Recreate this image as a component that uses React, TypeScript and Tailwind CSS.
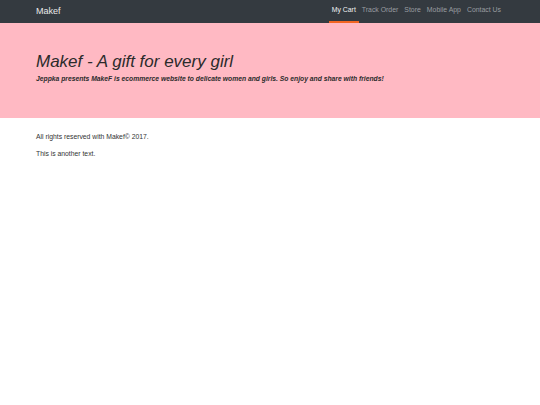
const links = ["My Cart", "Track Order", "Store", "Mobile App", "Contact Us"];

export default function App() {
  return (
    <div className="min-h-[405px] bg-white font-['Liberation_Sans',Arial,sans-serif] text-[#212529]">
      <nav className="flex h-[23px] items-stretch justify-between bg-[#343a40] pl-[36px] pr-[36px]">
        <a className="flex items-center text-[9px] text-[#e9e9e9]">Makef</a>
        <ul className="flex items-stretch">
          {links.map((l, i) => (
            <li
              key={l}
              className={`flex items-center border-b-2 px-[3px] text-[6.9px] ${
                i === 0 ? "border-[#f26522] text-[#f2f2f2]" : "border-transparent text-[#9a9da0]"
              }`}
            >
              {l}
            </li>
          ))}
        </ul>
      </nav>
      <header className="h-[95px] bg-[#ffb9c3] px-[36px] pt-[29px]">
        <h1 className="text-[17px] leading-[20px] italic text-[#2b2b2b]">Makef - A gift for every girl</h1>
        <p className="mt-[2px] text-[6.75px] font-bold italic text-[#2b2b2b]">
          Jeppka presents MakeF is ecommerce website to delicate women and girls. So enjoy and share with friends!
        </p>
      </header>
      <footer className="px-[36px] pt-[14px] text-[6.8px] text-[#333]">
        <p>All rights reserved with Makef© 2017.</p>
        <p className="mt-[7px]">This is another text.</p>
      </footer>
    </div>
  );
}
